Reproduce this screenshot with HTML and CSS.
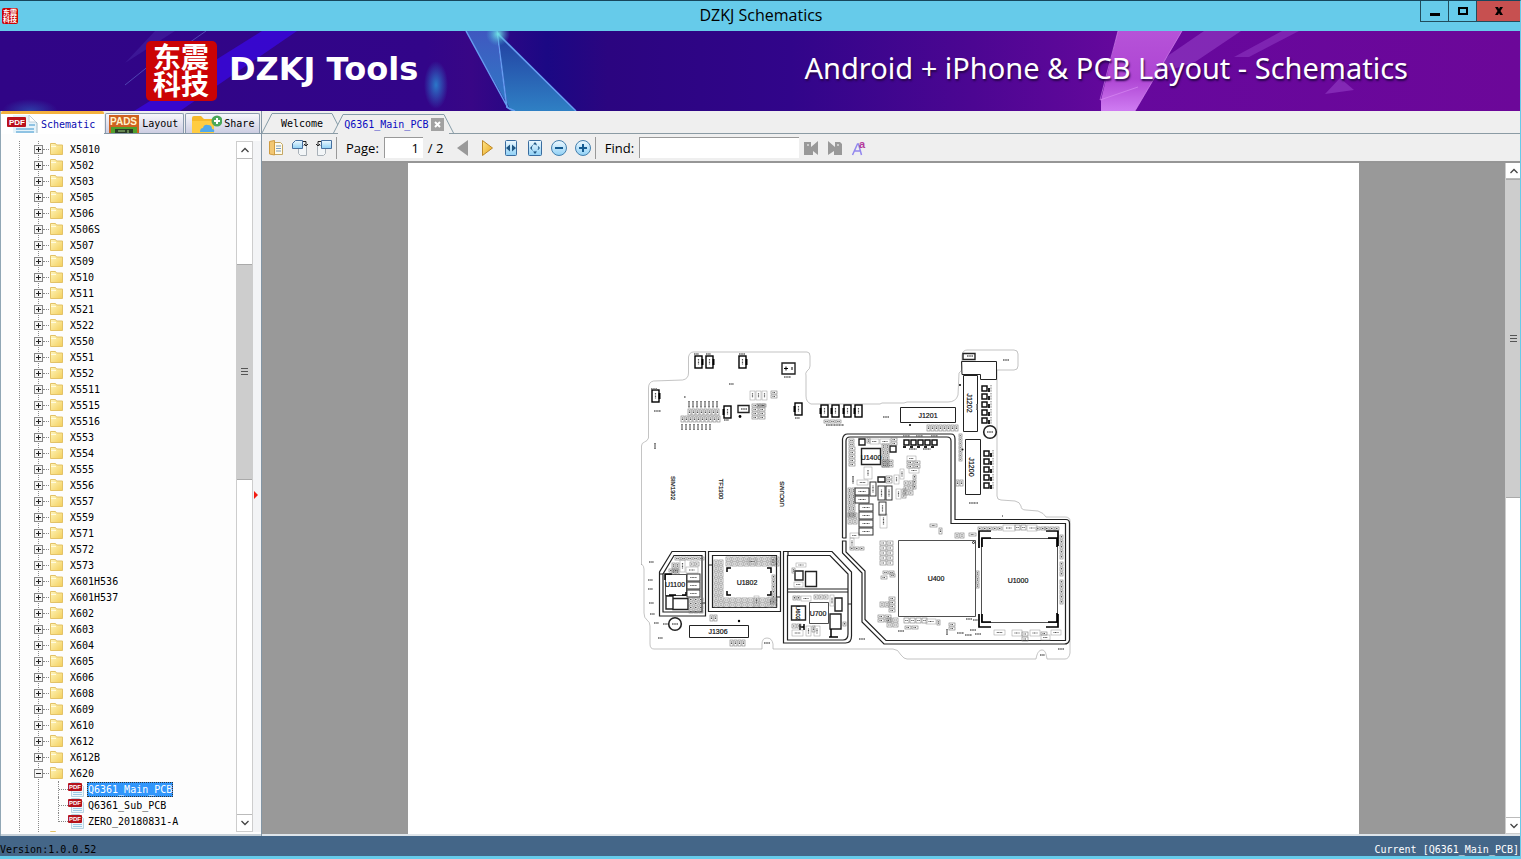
FILE: index.html
```html
<!DOCTYPE html>
<html>
	<head>
		<meta charset="utf-8" />
		<title>DZKJ Schematics</title>
		<link rel="stylesheet" href="styles.css">
		<script type="text/javascript" src="script.js"></script>
	</head>
	<body>
		<!--shared icons-->
		<svg class="defs" width="0" height="0">
			<defs>
				<linearGradient id="gFolder" x1="0" y1="0" x2="1" y2="1"><stop offset="0" stop-color="#fff6bf"/><stop offset="1" stop-color="#f3cf5b"/></linearGradient>
				<linearGradient id="gBlue" x1="0" y1="0" x2="0" y2="1"><stop offset="0" stop-color="#eef9ff"/><stop offset="1" stop-color="#8fd0f5"/></linearGradient>
				<linearGradient id="gGold" x1="0" y1="0" x2="1" y2="1"><stop offset="0" stop-color="#ffe58a"/><stop offset="1" stop-color="#e8a61c"/></linearGradient>
				<symbol id="folder" viewBox="0 0 16 14">
					<path d="M1.500 12.500v-11h5l1 1.500h6v9.500z" fill="url(#gFolder)" stroke="#e3c267"/>
					<path d="M2 4.500h5" stroke="#fffbe0"/>
				</symbol>
				<symbol id="pdf" viewBox="0 0 16 16">
					<path d="M3.500 1.500h8l4 4v10h-12z" fill="#eef6fb" stroke="#b8d3e2"/>
					<path d="M5 11.500h9M5 13.500h9" stroke="#9cc9e4"/>
					<rect x="0" y="2" width="14" height="8" rx="1" fill="#b5121b"/>
					<text x="7" y="8" text-anchor="middle" font-family="Liberation Sans" font-weight="bold" font-size="6" fill="#fff">PDF</text>
				</symbol>
				<symbol id="up" viewBox="0 0 16 16"><path d="M4.500 10l3.500-3.500 3.500 3.500" fill="none" stroke="#444" stroke-width="1.300"/></symbol>
				<symbol id="down" viewBox="0 0 16 16"><path d="M4.500 6l3.500 3.500 3.500-3.500" fill="none" stroke="#444" stroke-width="1.300"/></symbol>
			</defs>
		</svg>

		<div class="titlebar">
			<span class="seal seal-small">东震科技</span>
			<h1>DZKJ Schematics</h1>
			<div class="winbtns">
				<button aria-label="Minimize"><svg width="12" height="12"><path d="M1 8h10v3h-10z"/></svg></button>
				<button aria-label="Maximize"><svg width="12" height="12"><path d="M2 3h8v6h-8z" fill="none" stroke="#000" stroke-width="2"/></svg></button>
				<button class="close" aria-label="Close"><svg width="12" height="12"><path d="M2 2h3l1 2 1-2h3l-2.500 4 2.500 4h-3l-1-2-1 2h-3l2.500-4z"/></svg></button>
			</div>
		</div>

		<div class="banner">
			<svg class="banner-art" viewBox="0 0 1520 80" preserveAspectRatio="none">
				<defs>
					<linearGradient id="gTri" x1="0" y1="0" x2="0" y2="1"><stop offset="0" stop-color="#3f58c0"/><stop offset="1" stop-color="#2f7dc6"/></linearGradient>
					<linearGradient id="gTri2" x1="0" y1="0" x2="0" y2="1"><stop offset="0" stop-color="#213b9f"/><stop offset="1" stop-color="#2f80c4"/></linearGradient>
					<linearGradient id="gPink" x1="0" y1="0" x2="0" y2="1"><stop offset="0" stop-color="#b653d8"/><stop offset=".6" stop-color="#ae45d3"/><stop offset="1" stop-color="#cf7cf2"/></linearGradient>
					<radialGradient id="gGlow"><stop offset="0" stop-color="#2b77c9"/><stop offset="1" stop-color="#2b77c9" stop-opacity="0"/></radialGradient>
					<radialGradient id="gTeal"><stop offset="0" stop-color="#70e4e5"/><stop offset="1" stop-color="#47a7d7" stop-opacity="0"/></radialGradient>
				</defs>
				<path d="M262 0h35l-117 80h-46z" fill="#3a08de" opacity=".8"/>
				<path d="M155 0h20l-50 32z" fill="#5740b8" opacity=".3"/>
				<path d="M206 0l-20 14M150 34l-25 20" stroke="#6670d0" opacity=".6"/>
				<ellipse cx="436" cy="54" rx="12" ry="24" fill="url(#gGlow)"/>
				<ellipse cx="30" cy="80" rx="28" ry="12" fill="url(#gGlow)" opacity=".5"/>
				<path d="M466 0h30l11 77 4 3z" fill="url(#gTri)"/>
				<path d="M497 0l79 80h-65l-4-8z" fill="url(#gTri2)"/>
				<path d="M466 0l42 77 7 3M497 0l10 77M497 2l79 78" fill="none" stroke="#659cf0" stroke-width="1.500"/>
				<circle cx="498" cy="3" r="12" fill="url(#gTeal)"/>
				<path d="M1204 0h37l-46 31-46 15 20-22z" fill="#9440c7" opacity=".6"/>
				<path d="M1282 0h17l-50 26h-15z" fill="#9440c7" opacity=".5"/>
				<path d="M1118 0h64l-47 80h-34v-11z" fill="url(#gPink)"/>
				<path d="M1118 0l-18 69 38-13M1182 0l-47 80" fill="none" stroke="#dc91f5" opacity=".6"/>
				<path d="M1340 47l14 12-29 4z" fill="#9440c7" opacity=".6"/>
			</svg>
			<span class="seal">东震科技</span>
			<span class="brand">DZKJ Tools</span>
			<span class="slogan">Android + iPhone &amp; PCB Layout - Schematics</span>
		</div>

		<div class="main">
			<div class="side">
				<div class="side-tabs">
					<button class="side-tab active">
						<svg width="32" height="18" viewBox="0 0 32 18"><path d="M6 0h16l8 8v10h-24z" fill="#e5f3fa"/><path d="M22 0l8 8v10" fill="none" stroke="#9db8c6"/><path d="M22 0v7h7z" fill="#fff" stroke="#c2d2da"/><path d="M9 14h18M9 17h18M22 10h6" stroke="#8fc3e3" stroke-width="2"/><rect y="2" width="19" height="10" rx="1" fill="#ba101c"/><text x="2" y="10" font-size="8" font-weight="bold" font-family="Liberation Sans" fill="#fff">PDF</text></svg>
						Schematic
					</button>
					<button class="side-tab">
						<svg width="32" height="18" viewBox="0 0 32 18"><rect x="1" y="0" width="30" height="18" fill="#cf6220"/><text x="2" y="10" font-size="10" font-weight="bold" font-family="Liberation Sans" fill="#fff2cb">PADS</text><path d="M3 12h26v6h-26z" fill="#4fa02c"/><path d="M7 14h18v4h-18z" fill="#293a25"/><path d="M10 16h7M20 15v3" stroke="#9fd27c"/></svg>
						Layout
					</button>
					<button class="side-tab">
						<svg width="34" height="18" viewBox="0 0 34 18"><path d="M4 3q0-2 2-2h7l3 3h10v14h-20q-2 0-2-2z" fill="#f6b92a"/><path d="M4 6h22v12h-22z" fill="#ffcc42"/><path d="M12 17q0-4 3-4 1-4 5-3 4 0 4 4 3 0 2 3z" fill="#51a9ea"/><circle cx="29" cy="6" r="5.500" fill="#4ca85a"/><path d="M29 3v6M26 6h6" stroke="#fff" stroke-width="2"/></svg>
						Share
					</button>
				</div>
				<div class="side-body">
					<ul class="tree" id="tree"></ul>
					<div class="scroll">
						<button aria-label="Scroll up"><svg width="16" height="16"><use href="#up"/></svg></button>
						<div class="track"><div class="space-top"></div><div class="thumb"><i></i></div><div class="space-bottom"></div></div>
						<button aria-label="Scroll down"><svg width="16" height="16"><use href="#down"/></svg></button>
					</div>
					<div class="splitter"><svg width="5" height="8"><path d="M0 0l4 4-4 4z" fill="#f21c12"/></svg></div>
				</div>
			</div>

			<div class="content">
				<div class="doc-tabs">
					<button class="doc-tab">
						<svg width="10" height="20"><path d="M0 20L10 .5" fill="none" stroke="#869ca8"/></svg>
						<span>Welcome</span>
						<svg width="10" height="20"><path d="M0 .5L10 20" fill="none" stroke="#869ca8"/></svg>
					</button>
					<button class="doc-tab active">
						<svg width="10" height="20"><path d="M0 20L10 .5" fill="none" stroke="#869ca8"/></svg>
						<span>Q6361_Main_PCB<svg class="x" width="13" height="13"><rect width="13" height="13" fill="#a1a1a1"/><path d="M4 4l5 5M9 4l-5 5" stroke="#fff" stroke-width="2"/></svg></span>
						<svg width="10" height="20"><path d="M0 .5L10 20" fill="none" stroke="#869ca8"/></svg>
					</button>
				</div>

				<div class="toolbar">
					<button aria-label="Copy"><svg width="16" height="16"><path d="M5.500 2.500h7l2 2v10h-9z" fill="#fffbea" stroke="#c4a763"/><path d="M8 6h5M8 8.500h5M8 11h5" stroke="#799bc0"/><path d="M1.500 1.500l5-1v14.500l-5-1z" fill="#f2c773" stroke="#cf9b40"/></svg></button>
					<button aria-label="Rotate left"><svg width="18" height="18"><path d="M7.500 6.500h8v10h-6l-2-2z" fill="#f2f5f7" stroke="#a9b1b8"/><path d="M4.500 1.500h7v8h-10v-5z" fill="url(#gBlue)" stroke="#476f9f"/><path d="M12 2.500h3v4M13 5l2 2 2-2" fill="none" stroke="#222"/></svg></button>
					<button aria-label="Rotate right"><svg width="18" height="18"><path d="M2.500 6.500h8v8l-2 2h-6z" fill="#f2f5f7" stroke="#a9b1b8"/><path d="M6.500 1.500h10v8h-10z" fill="url(#gBlue)" stroke="#476f9f"/><path d="M6 2.500h-3v4M1 5l2 2 2-2" fill="none" stroke="#222"/></svg></button>
					<i class="sep"></i>
					<label for="page">Page:</label>
					<input id="page" class="page-no" type="text" value="1" />
					<span class="total">/ 2</span>
					<button aria-label="Previous page"><svg width="16" height="18"><path d="M13 1v16l-11-8z" fill="#999"/></svg></button>
					<button aria-label="Next page"><svg width="16" height="18"><path d="M3.500 1.500v15l10-7.500z" fill="url(#gGold)" stroke="#bd8828"/></svg></button>
					<button aria-label="Fit width"><svg width="16" height="18"><rect x="2.500" y="1.500" width="11" height="15" rx="1" fill="url(#gBlue)" stroke="#396c9f"/><path d="M7 5.500v7l-4-3.500zM9 5.500v7l4-3.500z" fill="#205784"/></svg></button>
					<button aria-label="Fit page"><svg width="16" height="18"><rect x="1.500" y="1.500" width="13" height="15" rx="1" fill="url(#gBlue)" stroke="#396c9f"/><path d="M8 3l2 2.500h-4zM8 15l2-2.500h-4zM3 9l2-2v4zM13 9l-2-2v4z" fill="#205784"/><circle cx="8" cy="9" r="3.500" fill="none" stroke="#477da7" stroke-dasharray="2 2"/></svg></button>
					<button aria-label="Zoom out"><svg width="18" height="18"><circle cx="9" cy="9" r="7.500" fill="url(#gBlue)" stroke="#4480ae"/><path d="M5 9h8" stroke="#145b91" stroke-width="2"/></svg></button>
					<button aria-label="Zoom in"><svg width="18" height="18"><circle cx="9" cy="9" r="7.500" fill="url(#gBlue)" stroke="#4480ae"/><path d="M5 9h8M9 5v8" stroke="#145b91" stroke-width="2"/></svg></button>
					<i class="sep"></i>
					<label for="find">Find:</label>
					<input id="find" class="find" type="text" />
					<button aria-label="Find previous"><svg width="16" height="16"><path d="M1 2h7v5l7-6v14l-5-4v4h-9z" fill="#999"/><circle cx="5" cy="5" r="1" fill="#ddd"/></svg></button>
					<button aria-label="Find next"><svg width="16" height="16"><path d="M1 1l7 6v-5h5l2 2v11h-8v-4l-6 4z" fill="#999"/><circle cx="11" cy="5" r="1" fill="#ddd"/></svg></button>
					<button aria-label="Match case"><svg width="18" height="20"><path d="M2.500 17l5-11h1l3 11M4.500 13h6" fill="none" stroke="#9287ee" stroke-width="1.500"/><text x="9" y="10" font-family="Liberation Sans" font-weight="bold" font-size="11" fill="#b43a9c">a</text></svg></button>
				</div>

				<div class="viewer">
					<div class="sheet">
						<svg class="pcb" id="pcb" viewBox="408 163 951 671" fill="none" stroke="#222" font-family="Liberation Sans">
							<!--board outline-->
							<path stroke="#aaa" stroke-width=".7" d="M641.500 565V446q0-3 3-4t4-4V388q0-6 5-7l29-1q6-1 6-7V357q1-5 5-5H807q3 0 3 4v10q0 3-3 5-2 2-1 5v20q0 6 5 8h69l2-1h22l3-1h41q8 0 10-7l1-22q3-2 3-5v-13q1-5 5-5h47q4 0 4 4v12q0 4-4 4h-17V496q0 4 4 4l14 1q5 1 6 5 0 4 5 4l12 1q6 2 8 6h19q5 0 5 4V653q-1 6-5 6h-18c-1-6-2-9-5-9s-5 3-6 9H907q-3 0-6-4-3-6-8-6H773v-5q-1-6-6-6t-5 6v5H654q-4 0-4-5v-18q0-4-3-6-3-2-3-7v-44q0-3-2.500-5z"/>
							<!--shields-->
							<g stroke-width="1.200">
								<path d="M842.500 538V439q1-5 5-5H951q4 0 4 5V519.500H1066q3.500 0 3.500 4V640q-1 4-5 4H884l-22-22V573l-19.500-20V541h4M846 538V441q0-4 4-4h97q4 0 4 4V523.500H1065.500V640.500H886l-21-21V571l-19-19V541M842.500 538h4"/>
								<path d="M672 551.500H705.500V616H659.500V572zM674 555.500H702V612H663V574z"/>
								<path d="M708.500 551.500H780.500V611.500H708.500zM712.500 555.500H776.500V607.500H712.500zM708 565h4M777 597h4M659 574h4M702 603h4"/>
								<path d="M783.500 551.500H832L851.500 572V636q0 7-6 7H783.500zM787.500 555.500H830L848 574V634q0 6-5 6H787.500zM787.500 589H848M787.500 592H848M788 551v4M848 604h4"/>
							</g>
							<!--connectors and chips-->
							<path d="M900.500 407.500h55v15h-55zM963.500 375.500h14v56h-14zM965.500 439.500h15v55h-15zM961.500 361.500h35v18h-16v-5h-18.500zM689.500 625.500h59v12h-59z"/>
							<path stroke-width=".8" d="M898.500 540.500h77v76h-77zM981.500 538.500h76v84h-76zM809.500 602.500h19v21h-19zM665.500 574.500h21v21h-21z"/>
							<path stroke-width="1.400" d="M861.500 448.500h19v16h-19zM791.500 606h14v14h-14zM782 363h13v11h-13zM738 405.500h11v7h-11zM795 571h8v9h-8zM805.500 571.500h11v15h-11zM830 614h11v15h-11zM835 598h7v13h-7zM673 598.500h15v11h-15zM963 353.500h12v6h-12zM890 446h6v6h-6zM878 477h7v5h-7zM859 439h6v6h-6zM666 596h7v13h-7z"/>
							<path stroke="#000" stroke-width="1.700" d="M979 548v-17h12M982 547v-9h9M1046 531h12v15M1048 538h9v9M979 614v13h12M1046 627h12v-13M982 614v8h9M1048 622h9v-9"/>
							<path stroke="#000" stroke-width="1.500" d="M727 572v-4h4M767 568h4v5M727 591v4h4M767 595h4v-4M665 580v-6h7M682 595h4v-3M669 595h7M800 624v6M804 624v6M800 627h4M831 629v8M829 637h9"/>
							<path stroke="#000" d="M784 368.500h4M786 366.500v4M792 367v3"/>
							<circle cx="990" cy="432" r="6.300" stroke-width="1.600"/>
							<circle cx="675" cy="624" r="6.300" stroke-width="1.600"/>
							<circle cx="973.500" cy="542.500" r="1"/>
							<g fill="#000" stroke="none"><circle cx="740" cy="416.500" r="1.400"/><circle cx="739" cy="621" r="1.200"/><circle cx="910" cy="425" r="1"/><circle cx="960" cy="385" r="1"/><circle cx="962.500" cy="449.500" r="1"/></g>
							<!--names-->
							<g fill="#111" stroke="#111" stroke-width=".2" font-size="7" text-anchor="middle">
								<text x="928" y="418">J1201</text><text x="871" y="460">U1400</text><text x="936" y="581">U400</text><text x="1018" y="583">U1000</text>
								<text x="675" y="587">U1100</text><text x="747" y="585">U1802</text><text x="818" y="616">U700</text><text x="718" y="634">J1306</text>
								<text transform="translate(967 403) rotate(90)">J1202</text><text transform="translate(969 467) rotate(90)">J1200</text><text transform="translate(796 613) rotate(90)" font-size="6">U602</text>
								<text transform="translate(671 488) rotate(90)" font-size="6">SIM1302</text><text transform="translate(719 489) rotate(90)" font-size="6">TF1300</text><text transform="translate(784 494) rotate(-90)" font-size="6">U0CUMS</text>
							</g>
						</svg>
					</div>
					<div class="scroll">
						<button aria-label="Scroll up"><svg width="16" height="16"><use href="#up"/></svg></button>
						<div class="track"><div class="thumb"><i></i></div><div class="space-bottom"></div></div>
						<button aria-label="Scroll down"><svg width="16" height="16"><use href="#down"/></svg></button>
					</div>
				</div>
			</div>
		</div>

		<div class="status">
			<span>Version:1.0.0.52</span>
			<span class="current">Current [Q6361_Main_PCB]</span>
		</div>
	</body>
</html>
```

FILE: styles.css
```css
*{
	margin: 0;
	padding: 0;
	box-sizing: border-box;
}
body{
	height: 100vh;
	display: flex;
	flex-direction: column;
	overflow: hidden;
	background-color: #66cbea;
	border-top: 1px solid #17465c;
	border-right: 1px solid #66cbea;
	border-bottom: 3px solid #66cbea;
	font-family: "DejaVu Sans Mono", "Noto Sans CJK SC", monospace;
	font-size: 10px;
	color: #000;
}
svg{
	display: block;
	flex: none;
}
button{
	font: inherit;
	color: inherit;
	background: none;
	border: none;
}
.defs{
	position: absolute;
}
/*title bar*/
.titlebar{
	height: 30px;
	flex: none;
	display: grid;
	grid-template-columns: 1fr auto 1fr;
	align-items: center;
	padding-left: 2px;
}
.titlebar h1{
	font: 16px/28px "Open Sans", sans-serif;
	align-self: start;
}
.winbtns{
	display: flex;
	justify-content: flex-end;
	align-self: start;
}
.winbtns button{
	width: 28px;
	height: 21px;
	display: flex;
	align-items: center;
	justify-content: center;
	border: 1px solid #214c5c;
	border-top: none;
	border-right: none;
}
.winbtns .close{
	width: 44px;
	background-color: #c75050;
}
/*red seal logo*/
.seal{
	width: 71px;
	height: 60px;
	flex: none;
	padding: 2px 7px;
	border-radius: 5px;
	background-color: #cb0305;
	color: #fff;
	font: bold 28px/27px "Noto Sans CJK SC", sans-serif;
	white-space: normal;
	word-break: break-all;
	position: relative;
}
.seal-small{
	width: 16px;
	height: 16px;
	padding: 1px;
	border-radius: 2px;
	font-size: 7px;
	line-height: 7px;
}
/*banner*/
.banner{
	height: 80px;
	flex: none;
	display: flex;
	align-items: center;
	padding: 0 112px 0 146px;
	position: relative;
	background: linear-gradient(90deg, #300586 0, #320589 28%, #380686 31%, #1b0884 36%, #2b0580 40%, #31058a 52%, #4c0692 64%, #66089d 74%, #6c0799 100%);
	color: #fff;
	white-space: nowrap;
}
.banner-art{
	position: absolute;
	left: 0;
	top: 0;
	width: 100%;
	height: 100%;
}
.brand{
	position: relative;
	margin-left: 12px;
	padding-bottom: 4px;
	font: bold 32px "DejaVu Sans", sans-serif;
}
.slogan{
	position: relative;
	margin-left: auto;
	padding-bottom: 8px;
	font: 29px "Noto Sans", sans-serif;
	text-shadow: 1px 2px 2px #28054c;
}
.main{
	flex: 1;
	min-height: 0;
	display: flex;
	background-color: #efefef;
}
/*left side*/
.side{
	width: 262px;
	flex: none;
	display: flex;
	flex-direction: column;
	border-right: 1px solid #8396a5;
	border-left: 1px solid #91a7b5;
}
.side-tabs{
	height: 23px;
	flex: none;
	display: flex;
	align-items: flex-end;
	gap: 1px;
	border-bottom: 1px solid #8396a5;
}
.side-tab{
	height: 20px;
	display: flex;
	align-items: center;
	gap: 2px;
	padding: 0 5px 0 2px;
	border: 1px solid #8b9bae;
	border-bottom: none;
	border-radius: 2px 2px 0 0;
	background: linear-gradient(#f7f7fb, #cdcee2);
}
.side-tab.active{
	height: 23px;
	margin-bottom: -1px;
	padding: 0 9px 0 6px;
	border: none;
	border-top: 3px solid #f4b13e;
	background: #fff;
	color: #0b0bb0;
}
.side-body{
	flex: 1;
	min-height: 0;
	display: flex;
	padding: 7px 0 2px;
	background-color: #fdfdfd;
	border-bottom: 2px solid #c6d0d8;
}
.tree{
	flex: 1;
	overflow: hidden;
	list-style: none;
	/*two dotted guide lines*/
	background-image: repeating-linear-gradient(#888 0, #888 1px, #fff 1px, #fff 2px), repeating-linear-gradient(#888 0, #888 1px, #fff 1px, #fff 2px);
	background-size: 1px 100%;
	background-position: 18px 0, 37px 0;
	background-repeat: no-repeat;
}
.tree li{
	height: 16px;
	display: flex;
	align-items: center;
	padding-left: 33px;
	white-space: nowrap;
}
.tree .toggle{
	width: 9px;
	height: 9px;
}
.tree .dots{
	width: 6px;
	border-top: 1px dotted #888;
}
.tree .name{
	margin-left: 5px;
}
.tree .child{
	padding-left: 57px;
}
.tree .child .dots{
	width: 10px;
	height: 16px;
	border-top: none;
	border-left: 1px dotted #888;
	background: linear-gradient(90deg, #888 50%, transparent 50%) 0 8px / 2px 1px repeat-x;
}
.tree .child:nth-last-child(2) .dots{
	height: 9px;
	margin-bottom: 7px;
}
.tree .child .name{
	height: 15px;
	line-height: 15px;
	margin-left: 3px;
	padding: 0 1px;
}
.tree .selected .name{
	background-color: #3196fb;
	color: #fff;
	outline: 1px dotted #333;
	outline-offset: -1px;
}
/*scroll bars*/
.scroll{
	width: 17px;
	flex: none;
	display: flex;
	flex-direction: column;
	border: 1px solid #cdcdcd;
	background-color: #fff;
}
.scroll button{
	height: 16px;
	width: 15px;
	overflow: hidden;
}
.track{
	flex: 1;
	display: flex;
	flex-direction: column;
	border-top: 1px solid #bbb;
	border-bottom: 1px solid #bbb;
}
.space-top{
	flex: 105;
}
.thumb{
	flex: 215;
	display: flex;
	align-items: center;
	justify-content: center;
	background-color: #cdcdcd;
	border-top: 1px solid #aaa;
	border-bottom: 1px solid #aaa;
}
.thumb i{
	width: 7px;
	height: 7px;
	background: repeating-linear-gradient(#555 0, #555 1px, transparent 1px, transparent 3px);
}
.space-bottom{
	flex: 336;
}
.splitter{
	width: 8px;
	display: flex;
	align-items: center;
	padding: 16px 0 0 1px;
	background-color: #f3f4f6;
}
/*documents*/
.content{
	flex: 1;
	min-width: 0;
	display: flex;
	flex-direction: column;
}
.doc-tabs{
	height: 23px;
	flex: none;
	display: flex;
	align-items: flex-end;
	border-bottom: 1px solid #8b9ba4;
}
.doc-tab{
	height: 20px;
	display: flex;
}
.doc-tab span{
	height: 20px;
	display: flex;
	align-items: center;
	gap: 3px;
	padding: 0 9px;
	border-top: 1px solid #869ca8;
}
.doc-tab.active{
	margin-left: -9px;
	margin-bottom: -1px;
	background: linear-gradient(#efefef, #efefef) 5px 0 / calc(100% - 10px) 100% no-repeat;
	color: #0b0bc0;
}
.doc-tab.active span{
	padding: 0 0 0 1px;
}
.toolbar{
	height: 29px;
	flex: none;
	display: flex;
	align-items: center;
	padding-left: 2px;
	border-bottom: 2px solid #969696;
	font: 13px "Open Sans", sans-serif;
}
.toolbar button{
	width: 24px;
	height: 24px;
	flex: none;
	display: flex;
	align-items: center;
	justify-content: center;
}
.sep{
	width: 1px;
	height: 22px;
	margin-right: 9px;
	background-color: #999;
}
.toolbar label{
	margin-right: 5px;
}
.toolbar input{
	height: 21px;
	border: none;
	border-top: 1px solid #999;
	border-left: 1px solid #999;
	background-color: #fff;
	font: inherit;
}
.page-no{
	width: 39px;
	padding-right: 4px;
	text-align: right;
}
.find{
	width: 160px;
}
.total{
	width: 28px;
	padding-left: 5px;
}
.viewer{
	flex: 1;
	min-height: 0;
	display: flex;
	background-color: #999;
	border-bottom: 2px solid #dfe5ea;
}
.sheet{
	flex: 1;
	min-width: 0;
	margin: 0 146px;
	background-color: #fff;
}
.pcb{
	width: 100%;
}
.viewer .scroll{
	width: 15px;
	border-top: none;
	border-right: none;
}
.viewer .scroll button{
	width: 14px;
	height: 15px;
}
.viewer .thumb{
	flex: 320;
}
.viewer .space-bottom{
	flex: 322;
}
/*status bar*/
.status{
	height: 20px;
	flex: none;
	display: flex;
	justify-content: space-between;
	align-items: flex-end;
	padding: 0 1px 1px 0;
	background-color: #446688;
}
.current{
	color: #fff;
}
```

FILE: script.js
```javascript
window.onload = function(){
	//folders of the tree
	var folders = ["X5010","X502","X503","X505","X506","X506S","X507","X509","X510","X511","X521","X522","X550","X551","X552",
		"X5511","X5515","X5516","X553","X554","X555","X556","X557","X559","X571","X572","X573","X601H536","X601H537","X602",
		"X603","X604","X605","X606","X608","X609","X610","X612","X612B","X620"];
	var files = ["Q6361_Main_PCB","Q6361_Sub_PCB","ZERO_20180831-A"];

	function folder(name, open){
		return '<li><button class="toggle" aria-label="Toggle"><svg width="9" height="9"><rect x=".5" y=".5" width="8" height="8" fill="#f5f5f5" stroke="#888"/><path d="M2 4.5h5' + (open ? '' : 'M4.5 2v5') + '" stroke="#222"/></svg></button><i class="dots"></i><svg width="16" height="14"><use href="#folder"/></svg><span class="name">' + name + '</span></li>';
	}
	var html = "";
	for(var i = 0; i < folders.length; i++){
		html += folder(folders[i], i == folders.length - 1);
	}
	for(var i = 0; i < files.length; i++){
		html += '<li class="child' + (i == 0 ? ' selected' : '') + '"><i class="dots"></i><svg width="16" height="16"><use href="#pdf"/></svg><span class="name">' + files[i] + '</span></li>';
	}
	html += folder("", false);
	document.getElementById("tree").innerHTML = html;

	//small parts of the board
	var out = "";
	function rect(x, y, w, h, line, color){
		out += '<rect x="' + x + '" y="' + y + '" width="' + w + '" height="' + h + '" stroke="' + color + '" stroke-width="' + line + '"/>';
	}
	//a marking inside a part, along its long side
	function mark(x, y, w, h){
		if(w >= h){
			out += '<path stroke="#555" stroke-width="1.2" stroke-dasharray="1 .5" d="M' + (x + w * .25) + ' ' + (y + h / 2) + 'h' + w * .5 + '"/>';
		}else{
			out += '<path stroke="#555" stroke-width="1.2" stroke-dasharray="1 .5" d="M' + (x + w / 2) + ' ' + (y + h * .25) + 'v' + h * .5 + '"/>';
		}
	}
	//x, y, width, height, columns, rows
	var banks = [
		[681,416,3,6,10,1],[688,409,3,6,8,1],[757,404,4,3,2,1],[752,404,6,3,2,4],[771,391,6,3,1,2],[824,420,5,3,3,1],
		[927,425,3,6,8,1],[959,434,3,3,1,7],[956,480,3,6,2,1],
		[849,439,5,3,1,2],[849,447,6,3,1,5],[867,438,3,5,1,1],[891,438,6,3,1,2],[882,444,3,5,2,4],[882,460,5,3,2,2],[907,461,6,3,2,2],
		[913,475,3,4,1,3],[904,481,4,4,2,3],[902,489,4,4,1,2],[886,476,6,3,1,2],[848,488,3,5,2,5],[848,513,4,5,2,2],[850,547,4,3,3,1],
		[880,541,6,4,2,5],[883,571,5,3,2,1],[890,574,5,3,1,1],[881,576,6,3,1,1],[880,602,4,5,2,1],[889,597,6,3,1,4],[878,615,6,3,2,2],[887,618,5,4,2,2],[904,618,5,5,4,1],[905,626,6,3,2,1],
		[930,524,7,3,1,1],[939,528,3,6,1,1],[955,533,4,5,2,1],[969,533,7,3,1,1],[978,527,4,3,5,1],[1015,525,5,5,2,1],[1036,527,4,3,2,1],[1045,527,4,3,3,1],
		[1060,535,3,4,1,5],[1060,562,3,4,1,3],[1060,580,3,4,1,5],[976,571,3,5,1,3],[937,620,3,5,1,1],[949,623,6,3,1,2],[1022,632,6,4,1,2],[1041,632,6,3,1,1],
		[675,557,5,3,5,1],[672,563,3,5,2,2],[690,562,4,4,2,1],[669,569,4,3,2,1],[689,598,4,3,3,4],
		[714,560,4,5,2,8],[726,557,5,4,9,2],[724,598,5,4,9,2],[772,575,3,4,1,6],[710,615,3,6,2,1],[730,640,3,6,4,1],[771,557,4,8,1,1],
		[792,568,3,5,1,1],[793,596,3,4,2,1],[814,595,4,4,3,1],[792,624,4,4,2,1],[812,626,3,6,1,1],[843,622,3,4,1,1]
	];
	for(var i = 0; i < banks.length; i++){
		var b = banks[i];
		for(var r = 0; r < b[5]; r++){
			for(var c = 0; c < b[4]; c++){
				var x = b[0] + c * (b[2] + 1), y = b[1] + r * (b[3] + 1);
				rect(x, y, b[2], b[3], .6, "#777");
				mark(x, y, b[2], b[3]);
			}
		}
	}
	//light parts: x, y, width, height
	var light = [
		[750,391,5,9],[756,391,5,9],[762,391,5,9],[870,439,9,5],[880,439,10,5],[907,456,9,5],[909,468,10,5],[864,467,8,12],[857,480,11,5],
		[900,469,4,10],[894,475,5,9],[896,489,5,10],[880,514,7,14],[850,533,9,5],[1003,525,12,6],[1027,525,10,6],[926,619,10,5],
		[994,630,11,5],[1012,630,10,6],[1030,630,10,6],[1041,635,9,5],[1051,630,10,5],[680,560,5,12],[686,567,12,6],[747,559,10,5],
		[754,596,5,10],[768,597,5,10],[796,563,10,4],[794,582,9,5],[801,596,10,5],[830,595,4,11],[792,630,11,6],[806,626,5,10],[814,626,6,10],[850,538,4,10]
	];
	for(var i = 0; i < light.length; i++){
		rect(light[i][0], light[i][1], light[i][2], light[i][3], .5, "#999");
		mark(light[i][0], light[i][1], light[i][2], light[i][3]);
	}
	//dark parts
	var dark = [
		[855,488,14,7],[855,496,14,7],[859,504,14,7],[859,512,14,7],[859,520,14,7],[859,528,14,7],[870,482,6,14],[878,486,7,14],[886,486,6,14],[879,502,7,13],
		[687,574,13,7],[687,582,13,7],[687,590,13,7]
	];
	for(var i = 0; i < dark.length; i++){
		rect(dark[i][0], dark[i][1], dark[i][2], dark[i][3], 1, "#333");
		mark(dark[i][0], dark[i][1], dark[i][2], dark[i][3]);
	}
	//diodes with a bump on one side: centre x, centre y, side
	var diodes = [[698,362,1],[709,362,1],[742,362,1],[655,396,1],[727,412,-1],[798,409,-1],[824,411,-1],[835,411,-1],[847,411,-1],[858,411,-1]];
	for(var i = 0; i < diodes.length; i++){
		var d = diodes[i];
		rect(d[0] - 3, d[1] - 6, 7, 12, 1.4, "#000");
		mark(d[0] - 3, d[1] - 6, 7, 12);
		out += '<path stroke="#000" stroke-width="2" d="M' + (d[0] + .5 + d[2] * 4) + ' ' + (d[1] - 3) + 'v6"/>';
	}
	//test pads
	var pads = [[982,386],[982,394],[982,402],[982,410],[982,418],[984,451],[984,459],[984,467],[984,475],[984,483]];
	for(var i = 0; i < pads.length; i++){
		rect(pads[i][0], pads[i][1], 5, 5, 1.5, "#111");
		out += '<path stroke="#222" stroke-width="2" d="M' + (pads[i][0] + 7) + ' ' + (pads[i][1] + 2) + 'v4"/><path stroke="#777" stroke-dasharray="1 .6" d="M' + (pads[i][0] + 9) + ' ' + (pads[i][1] - 1) + 'v7"/>';
	}
	for(var i = 0; i < 5; i++){
		rect(904 + i * 7, 440, 5, 5, 1.5, "#111");
		out += '<path stroke="#222" stroke-width="2" d="M' + (903 + i * 7) + ' 447h3"/>';
	}
	//reference marks: x, y, length, upright
	var marks = [[654,411,7],[729,384,5],[655,443,6,1],[684,397,2],[694,354,5],[706,354,5],[739,354,6],[651,389,6],[784,377,7],[724,420,5],[795,418,5],
		[883,417,6],[1003,360,6],[969,503,9],[1002,516,1],[649,562,5],[648,580,5],[648,589,5],[649,603,5],[650,614,5],[654,623,5],[663,624,5],[658,638,5],
		[764,643,6],[859,639,6],[1058,649,6],[1040,655,5],[898,631,6],[957,633,7],[965,635,7],[966,619,6],[973,620,5],[970,630,6],[975,634,6],[947,629,6,1],
		[903,436,7],[916,436,7],[931,436,7],[909,449,8],[923,449,8],[853,476,8,1],[987,432,6],[672,624,6],[741,409,6],[967,356,6],[826,425,18],[977,404,6,1]];
	for(var i = 0; i < 8; i++){
		marks.push([689 + i * 4, 401, 7, 1]);
		marks.push([682 + i * 4, 424, 6, 1]);
	}
	for(var i = 0; i < marks.length; i++){
		var m = marks[i];
		out += '<path stroke="#666" stroke-width="1.6" stroke-dasharray="1.2 .4" d="M' + m[0] + ' ' + m[1] + (m[3] ? 'v' : 'h') + m[2] + '"/>';
	}
	document.getElementById("pcb").innerHTML += out;
};
```
